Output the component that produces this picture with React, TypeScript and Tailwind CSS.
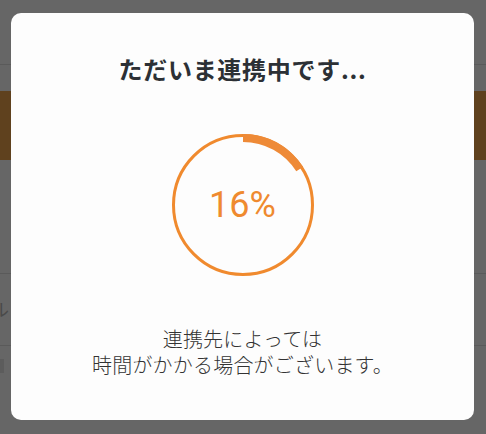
const JP = { fontFamily: '"Noto Sans CJK JP", "Noto Sans", sans-serif' };

function ProgressRing({ percent }: { percent: number }) {
  const r = 67;
  const c = 2 * Math.PI * r;
  return (
    <div className="relative w-[142px] h-[142px]">
      <svg width="142" height="142" viewBox="0 0 142 142" className="absolute inset-0">
        <circle cx="71" cy="71" r="69.5" fill="none" stroke="#f08a2e" strokeWidth="3" />
        <circle
          cx="71"
          cy="71"
          r={r}
          fill="none"
          stroke="#ee8a37"
          strokeWidth="8"
          strokeDasharray={`${(c * percent) / 100} ${c}`}
          transform="rotate(-90 71 71)"
        />
      </svg>
      <div className="absolute inset-0 flex items-center justify-center">
        <span
          className="text-[36px] font-normal text-[#ef8a2f] leading-none"
          style={{ fontFamily: 'Roboto, "Liberation Sans", sans-serif' }}
        >
          {percent}%
        </span>
      </div>
    </div>
  );
}

export default function App() {
  return (
    <div className="relative w-[486px] h-[434px] overflow-hidden bg-[#666666]" style={JP}>
      {/* page behind the overlay */}
      <div className="h-[65px] border-b border-[#5a5a5a]" />
      <div className="h-[26px]" />
      <div className="h-[69px] bg-[#5f411e]" />
      <div className="h-[114px] border-b border-[#5a5a5a]" />
      <div className="h-[72px] border-b border-[#5a5a5a] flex items-center">
        <span className="text-[18px] text-[#4a4a4a] -ml-[9px]">ル</span>
      </div>
      <div className="h-[40px] flex items-center">
        <span className="w-[4px] h-[14px] bg-[#5c5c5c]" />
      </div>

      {/* modal */}
      <div className="absolute left-[11px] top-[13px] w-[463px] h-[407px] rounded-[10px] bg-[#fdfdfd] flex flex-col items-center">
        <h1 className="mt-[40px] text-[24px] leading-[32px] font-bold text-[#2c3035] tracking-[0.03em]">
          ただいま連携中です...
        </h1>
        <div className="mt-[49px]">
          <ProgressRing percent={16} />
        </div>
        <p className="mt-[50px] text-[20px] leading-[26px] font-light text-[#333333] text-center tracking-[0.01em]">
          連携先によっては
          <br />
          時間がかかる場合がございます。
        </p>
      </div>
    </div>
  );
}
